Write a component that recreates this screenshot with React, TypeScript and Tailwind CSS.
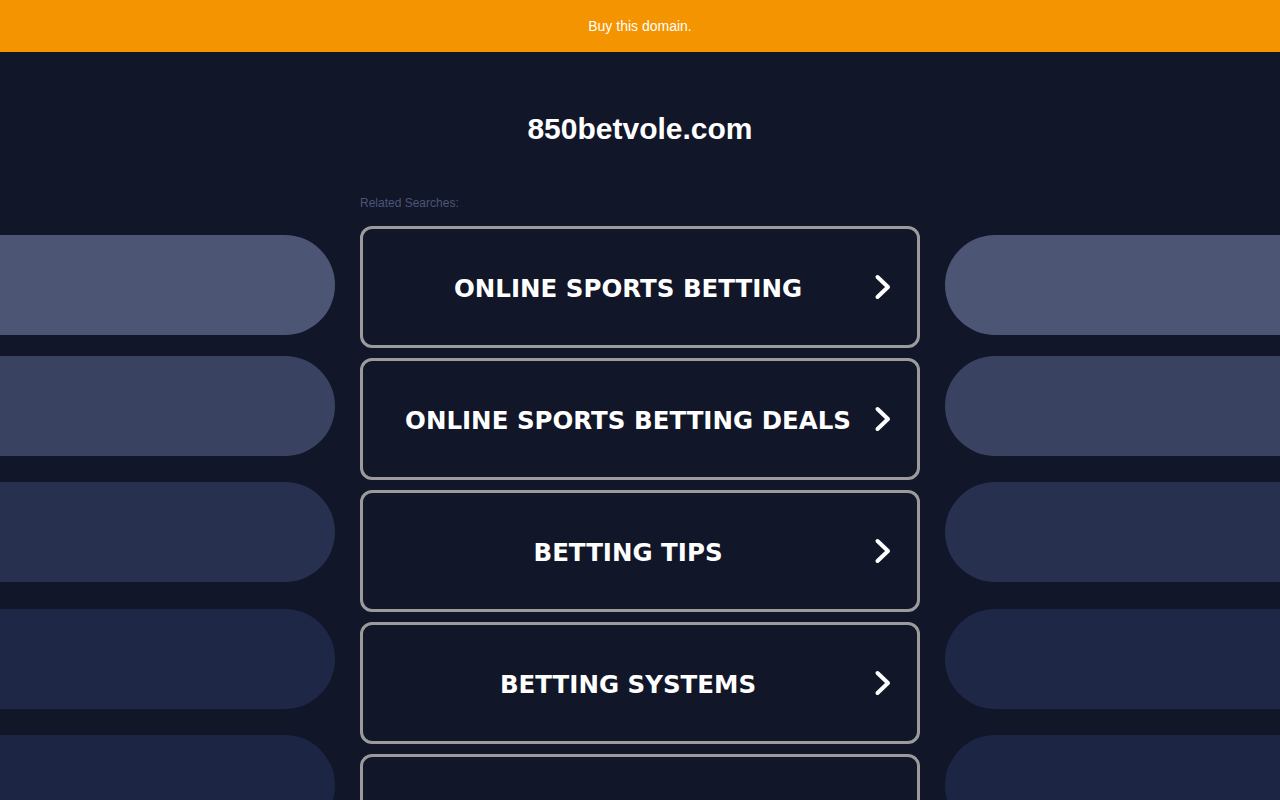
import React from "react";

const items = [
  "ONLINE SPORTS BETTING",
  "ONLINE SPORTS BETTING DEALS",
  "BETTING TIPS",
  "BETTING SYSTEMS",
  "SPORTS BETTING ODDS",
];

function Chevron() {
  return (
    <svg width="24" height="28" viewBox="0 0 24 28" className="shrink-0">
      <path d="M6.5 4 L17 14 L6.5 24" fill="none" stroke="#ffffff" strokeWidth="4" strokeLinecap="round" strokeLinejoin="round" />
    </svg>
  );
}

export default function App() {
  return (
    <div className="min-h-screen bg-[#111629] overflow-hidden" style={{ fontFamily: "Arial, 'Liberation Sans', sans-serif" }}>
      <div className="h-[52px] bg-[#f39400] flex items-center justify-center text-white text-[14px] font-['Liberation_Sans',Arial,sans-serif]">
        Buy this domain.
      </div>
      <div className="pt-[59px] flex justify-center">
        <h1 className="text-white font-bold text-[30px] leading-[36px] font-['Liberation_Sans',Arial,sans-serif]">850betvole.com</h1>
      </div>
      <div className="flex mt-[50px]">
        <div className="w-[335px] shrink-0 flex flex-col pt-[38px]">
          <div className="h-[100px] rounded-r-full bg-[#4c5574]" />
          <div className="h-[100px] mt-[21px] rounded-r-full bg-[#3a4261]" />
          <div className="h-[100px] mt-[26px] rounded-r-full bg-[#283050]" />
          <div className="h-[100px] mt-[27px] rounded-r-full bg-[#1f2747]" />
          <div className="h-[100px] mt-[26px] rounded-r-full bg-[#1d2545]" />
        </div>
        <div className="w-[560px] shrink-0 mx-[25px] flex flex-col">
          <div className="text-[12px] leading-[12px] text-[#4d5578] font-['Liberation_Sans',Arial,sans-serif]">Related Searches:</div>
          <div className="mt-[17px] flex flex-col gap-[10px]">
            {items.map((t) => (
              <div key={t} className="h-[122px] border-[3px] border-[#9b9b9b] rounded-[12px] flex items-center pl-[22px] pr-[22px]">
                <span className="flex-1 text-center text-white font-bold text-[24.5px] pt-[4px] font-['DejaVu_Sans',Verdana,sans-serif]">{t}</span>
                <Chevron />
              </div>
            ))}
          </div>
        </div>
        <div className="flex-1 flex flex-col pt-[38px]">
          <div className="h-[100px] rounded-l-full bg-[#4c5574]" />
          <div className="h-[100px] mt-[21px] rounded-l-full bg-[#3a4261]" />
          <div className="h-[100px] mt-[26px] rounded-l-full bg-[#283050]" />
          <div className="h-[100px] mt-[27px] rounded-l-full bg-[#1f2747]" />
          <div className="h-[100px] mt-[26px] rounded-l-full bg-[#1d2545]" />
        </div>
      </div>
    </div>
  );
}
